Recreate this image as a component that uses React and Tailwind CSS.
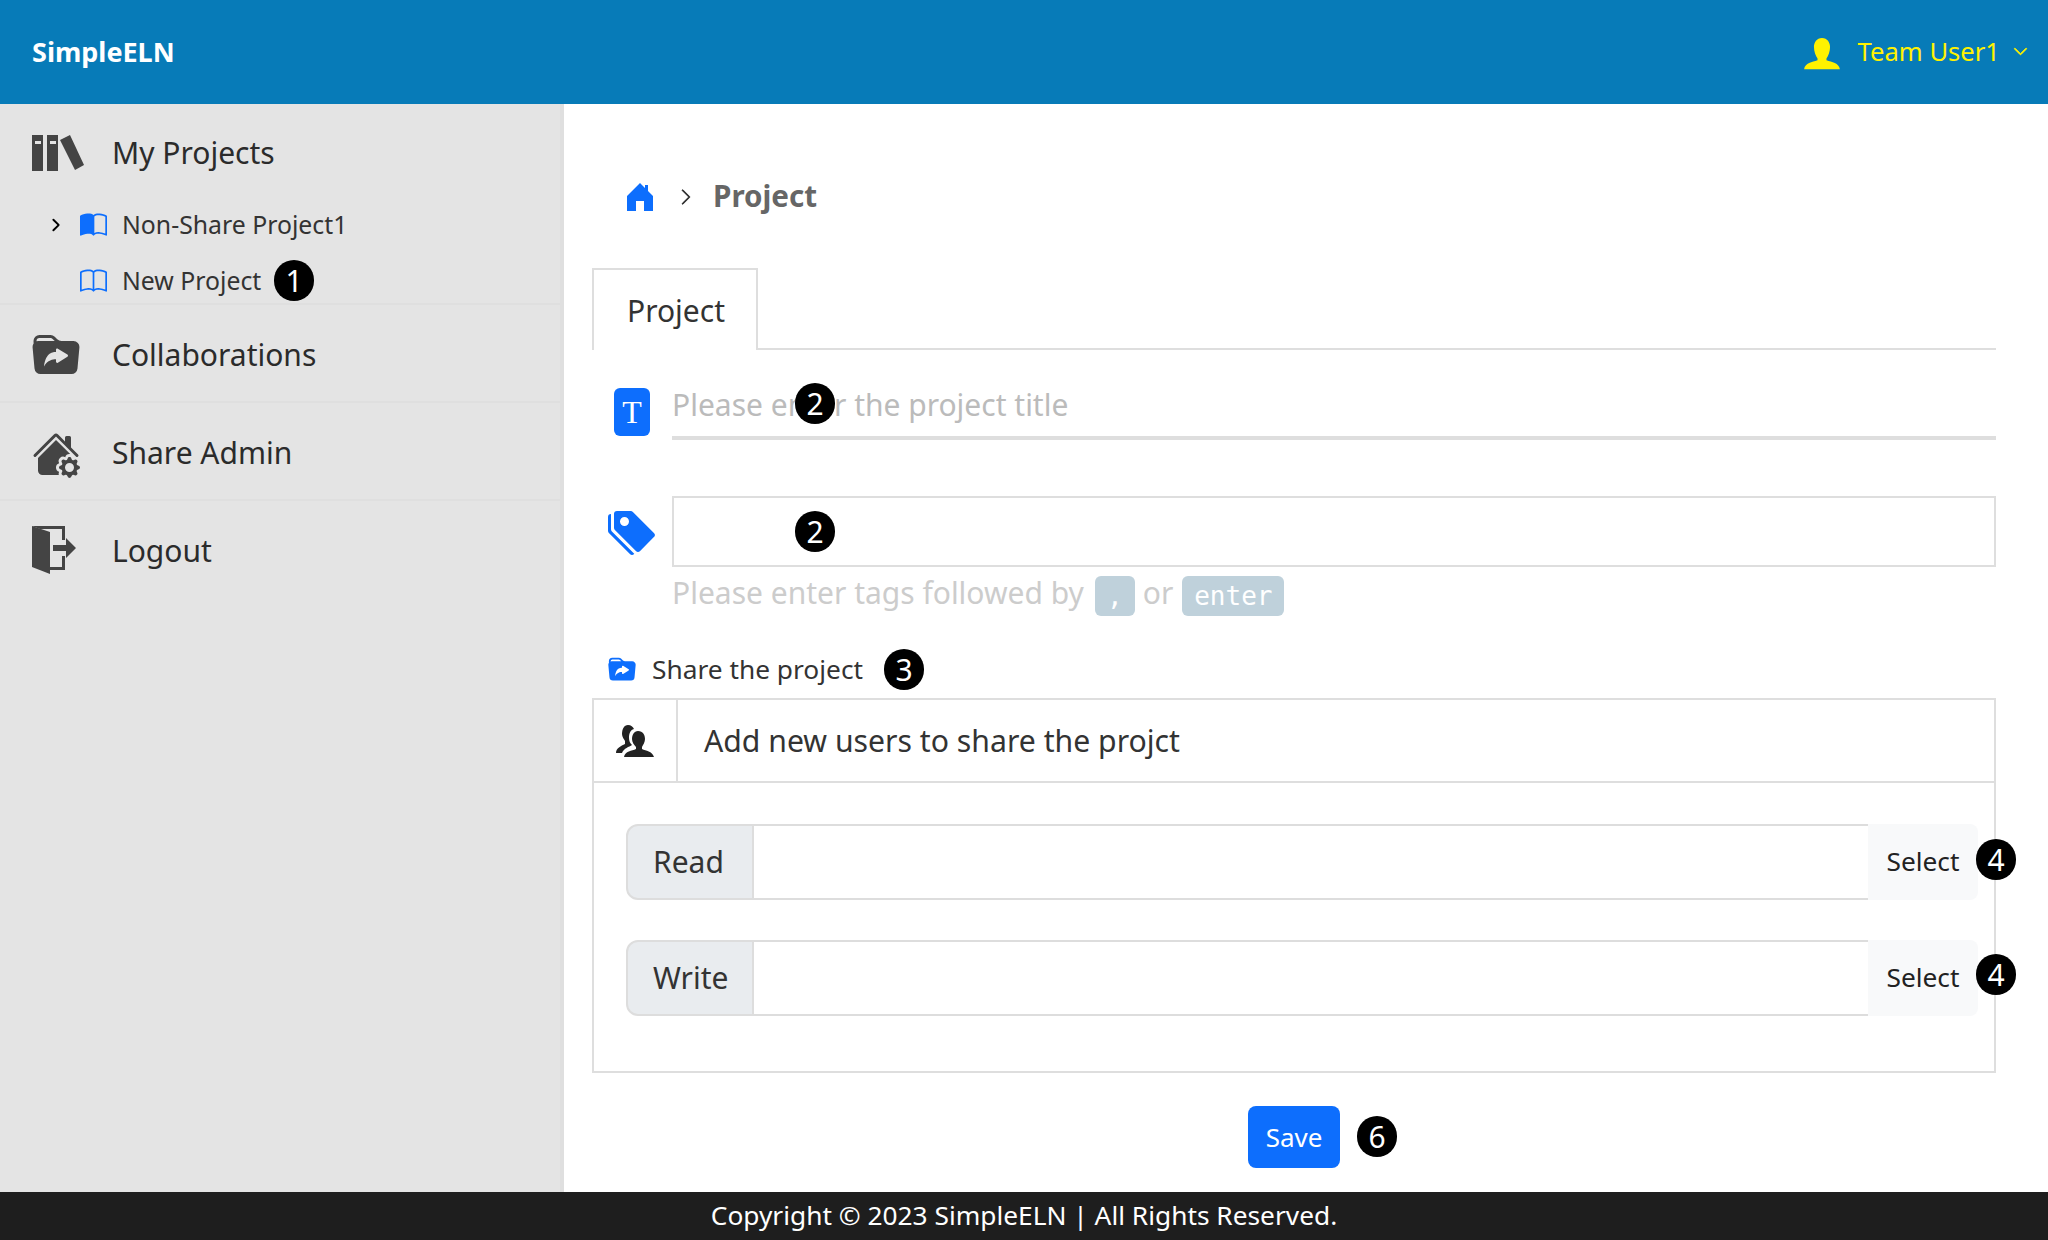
import React from "react";
import {
  BsBook,
  BsBookHalf,
  BsChevronDown,
  BsChevronRight,
  BsFolderSymlinkFill,
  BsHouseGearFill,
  BsTagsFill,
} from "react-icons/bs";

function Badge({ n, className }) {
  return (
    <span className={"absolute flex h-[41px] w-[40px] items-center justify-center rounded-full bg-black text-[30px] leading-none text-white " + className}>
      {n}
    </span>
  );
}

function LibraryIcon() {
  return (
    <svg width="52" height="37" viewBox="0 0 52 37" fill="#444">
      <path d="M0 1h11v36H0z" />
      <path d="M15 1h11v36H15z" />
      <path d="M28 6l10-5 14 30-9 5z" />
      <path d="M3 7h6v3H3zM18 7h6v3h-6z" fill="#e4e4e4" />
    </svg>
  );
}

function LogoutIcon() {
  return (
    <svg width="45" height="48" viewBox="0 0 45 48" fill="#444">
      <path d="M0 0l18 6v42L0 41z" />
      <path d="M0 0h33v14h-3V3H8zM30 30h3v14H17v-3h13z" />
      <path d="M21 19h13v-7l10 10-10 10v-7H21z" />
    </svg>
  );
}

function HomeIcon() {
  return (
    <svg width="26" height="28" viewBox="0 0 26 28" fill="#0d6efd">
      <path d="M13 0l5 5V2h3v6l5 5v15h-9V18H9v10H0V13z" />
    </svg>
  );
}

function UserIcon({ fill, size = 40 }) {
  return (
    <svg width={size} height={size * 0.87} viewBox="0 0 40 35" fill={fill}>
      <path d="M20 0c6 0 9 5 9 10 0 5-2 10-4 13v2c6 2 14 3 15 10H0c1-7 9-8 15-10v-2c-2-3-4-8-4-13 0-5 3-10 9-10z" />
    </svg>
  );
}

function UsersIcon() {
  return (
    <svg width="38" height="32" viewBox="0 0 38 32" fill="#222">
      <path d="M22 6c5 0 7 4 7 8 0 3-2 6-3 8v2c4 2 10 2 12 8H8c1-6 8-6 12-8v-2c-2-2-4-5-4-8 0-4 2-8 6-8z" />
      <path d="M12 0c3 0 5 2 6 4-4 1-5 5-5 9 0 3 1 5 3 7-3 2-8 3-10 8H0c0-5 5-7 9-9v-3c-1-2-3-4-3-7 0-5 2-9 6-9z" />
    </svg>
  );
}

function SubItem({ icon, label, chevron, children }) {
  return (
    <div className="relative flex h-[56px] items-center pl-[49px]">
      <span className="flex w-[31px] items-center">
        {chevron && <BsChevronRight className="text-[14px] text-black" strokeWidth="1.2" />}
      </span>
      <span className="flex w-[42px] items-center text-[27px] text-[#0d6efd]">{icon}</span>
      <span className="text-[24.8px] text-[#333]">{label}</span>
      {children}
    </div>
  );
}

function MenuRow({ icon, label }) {
  return (
    <div className="flex h-[98px] items-center border-b-2 border-[#dfdfdf] pl-8 pt-[3px]">
      <span className="flex w-[80px] items-center pt-[2px]">{icon}</span>
      <span className="text-[30px] text-[#2b2b2b]">{label}</span>
    </div>
  );
}

function GroupRow({ label, badgeClass }) {
  return (
    <div className="relative flex h-[76px]">
      <div className="flex w-[128px] items-center rounded-l-xl border-2 border-[#ddd] bg-[#e9ecef] pb-[2px] pl-[25px] text-[30px] text-[#333]">
        {label}
      </div>
      <div className="flex-1 border-y-2 border-[#ddd]" />
      <button className="w-[110px] rounded-r-lg bg-[#f8f9fa] text-[26.3px] text-[#222]">Select</button>
      <Badge n="4" className={badgeClass} />
    </div>
  );
}

export default function App() {
  return (
    <div className="flex h-[1240px] flex-col overflow-hidden font-['Noto_Sans',sans-serif]">
      <header className="flex h-[104px] items-center justify-between bg-[#077bb8] pl-8 pr-[20px]">
        <span className="text-[27px] font-bold text-white">SimpleELN</span>
        <div className="flex items-center text-[#fff200]">
          <span className="mt-1"><UserIcon fill="#fff200" size={36} /></span>
          <span className="ml-[18px] text-[25.6px]">Team User1</span>
          <BsChevronDown className="ml-[13px] text-[15px]" strokeWidth="1" />
        </div>
      </header>

      <div className="flex flex-1">
        <aside className="w-[564px] border-r-4 border-[#dfdfdf] bg-[#e4e4e4]">
          <div className="h-[201px] border-b-2 border-[#dfdfdf]">
            <div className="flex h-[93px] items-center pl-8 pt-1">
              <span className="flex w-[80px] items-center"><LibraryIcon /></span>
              <span className="text-[30px] text-[#2b2b2b]">My Projects</span>
            </div>
            <SubItem icon={<BsBookHalf />} label="Non-Share Project1" chevron />
            <SubItem icon={<BsBook />} label="New Project">
              <Badge n="1" className="left-[274px] top-[7px]" />
            </SubItem>
          </div>
          <MenuRow icon={<BsFolderSymlinkFill className="text-[48px] text-[#444]" />} label="Collaborations" />
          <MenuRow icon={<BsHouseGearFill className="text-[48px] text-[#444]" />} label="Share Admin" />
          <div className="flex h-[98px] items-center pl-8">
            <span className="flex w-[80px] items-center"><LogoutIcon /></span>
            <span className="text-[30px] text-[#2b2b2b]">Logout</span>
          </div>
        </aside>

        <main className="flex-1 pl-7 pr-[52px] pt-[58px]">
          <div className="flex h-[70px] items-center pl-[35px]">
            <HomeIcon />
            <BsChevronRight className="ml-[24px] text-[18px] text-[#222]" strokeWidth="0.5" />
            <span className="ml-[18px] pb-[2px] text-[29.6px] font-bold text-[#666]">Project</span>
          </div>

          <div className="mt-[36px] border-b-2 border-[#dedede]">
            <div className="-mb-[2px] flex h-[82px] w-[166px] items-center border-x-2 border-t-2 border-[#dedede] bg-white pl-[33px] text-[30px] text-[#333]">
              Project
            </div>
          </div>

          <div className="relative mt-[38px] flex items-start pl-[22px]">
            <span className="flex h-[48px] w-[36px] items-center justify-center rounded-md bg-[#0d6efd] font-['Liberation_Serif',serif] text-[32px] text-white">
              T
            </span>
            <div className="ml-[22px] flex h-[52px] flex-1 items-center border-b-4 border-[#dedede] pb-[16px] text-[30px] text-[#bbb]">
              Please enter the project title
            </div>
            <Badge n="2" className="left-[203px] top-[-5px]" />
          </div>

          <div className="relative mt-[56px] flex items-center pl-4">
            <span className="w-[64px]"><BsTagsFill className="text-[48px] text-[#0d6efd]" /></span>
            <div className="h-[71px] flex-1 border-2 border-[#dedede]" />
            <Badge n="2" className="left-[203px] top-[15px]" />
          </div>

          <div className="mt-[9px] flex h-[40px] items-center pl-20 text-[30px] text-[#ccc]">
            <span className="pb-[8px]">Please enter tags followed by</span>
            <kbd className="ml-[11px] flex h-[40px] w-[40px] items-center justify-center rounded-md bg-[#bfd1db] font-['DejaVu_Sans_Mono',monospace] text-[26px] text-white">,</kbd>
            <span className="ml-2 pb-[8px]">or</span>
            <kbd className="ml-[9px] flex h-[40px] w-[102px] items-center justify-center rounded-md bg-[#bfd1db] font-['DejaVu_Sans_Mono',monospace] text-[26px] text-white">enter</kbd>
          </div>

          <div className="relative mt-[37px] flex h-[34px] items-center pl-4">
            <BsFolderSymlinkFill className="text-[28px] text-[#0d6efd]" />
            <span className="ml-4 text-[26.3px] text-[#333]">Share the project</span>
            <Badge n="3" className="left-[292px] top-[-4px]" />
          </div>

          <div className="mt-[11px] h-[375px] border-2 border-[#dedede]">
            <div className="flex h-[83px] border-b-2 border-[#dedede]">
              <div className="flex w-[84px] items-center justify-center border-r-2 border-[#dedede]">
                <UsersIcon />
              </div>
              <div className="flex items-center pl-[26px] text-[30.2px] text-[#333]">Add new users to share the projct</div>
            </div>
            <div className="flex flex-col gap-[40px] pl-[32px] pr-[16px] pt-[41px]">
              <GroupRow label="Read" badgeClass="right-[-38px] top-[15px]" />
              <GroupRow label="Write" badgeClass="right-[-38px] top-[14px]" />
            </div>
          </div>

          <div className="relative mt-[33px] flex justify-center">
            <button className="h-[62px] w-[92px] rounded-lg bg-[#0d6efd] text-[26px] text-white">Save</button>
            <Badge n="6" className="left-[765px] top-[10px]" />
          </div>
        </main>
      </div>

      <footer className="flex h-[48px] items-center justify-center bg-[#1e1e1e] text-[26.3px] text-white">
        Copyright © 2023 SimpleELN | All Rights Reserved.
      </footer>
    </div>
  );
}
